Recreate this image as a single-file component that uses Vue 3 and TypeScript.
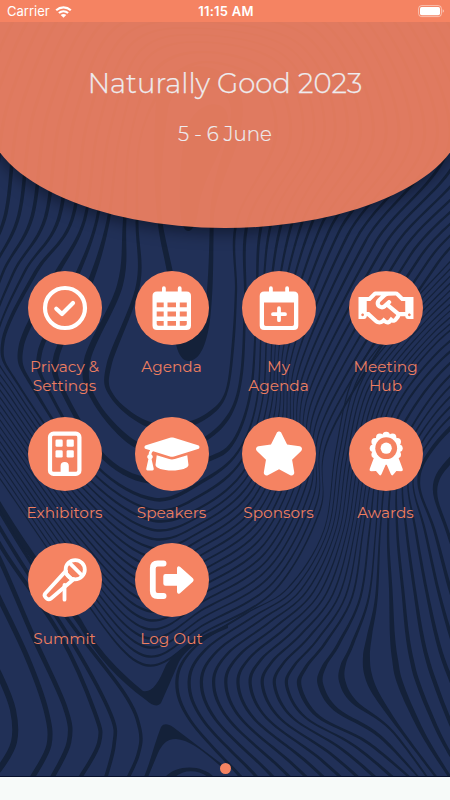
<script setup lang="ts">
type Point = [number, number]
interface Key { at: number; pts: Point[] }
interface Tile { id: string; label: string; icon: string }

const tiles: Tile[] = [
  { id: 'privacy', label: 'Privacy &\nSettings', icon: 'check' },
  { id: 'agenda', label: 'Agenda', icon: 'calendar' },
  { id: 'my-agenda', label: 'My\nAgenda', icon: 'calendar-plus' },
  { id: 'meeting', label: 'Meeting\nHub', icon: 'handshake' },
  { id: 'exhibitors', label: 'Exhibitors', icon: 'building' },
  { id: 'speakers', label: 'Speakers', icon: 'cap' },
  { id: 'sponsors', label: 'Sponsors', icon: 'star' },
  { id: 'awards', label: 'Awards', icon: 'award' },
  { id: 'summit', label: 'Summit', icon: 'mic' },
  { id: 'logout', label: 'Log Out', icon: 'logout' },
]

const scallops: Point[] = Array.from({ length: 12 }, (_, i) => {
  const a = (i * Math.PI) / 6
  return [37.2 + 12.7 * Math.cos(a), 31.2 + 12.7 * Math.sin(a)] as Point
})

// Nested rings that fill the upper two thirds of the backdrop
const rings: Key[] = [
  { at: 0, pts: [[205, 62], [165, 85], [140, 140], [137, 220], [138, 285], [109, 365], [112, 396], [145, 423], [180, 426], [208, 415], [226, 393], [233, 345], [236, 290], [237, 220], [275, 140], [260, 82]] },
  { at: 1, pts: [[205, 52], [155, 70], [130, 140], [125, 220], [121, 285], [88, 360], [96, 402], [134, 443], [172, 450], [207, 438], [232, 410], [242, 370], [245, 300], [248, 220], [290, 140], [270, 73]] },
  { at: 2, pts: [[205, 42], [147, 58], [120, 135], [108, 220], [88, 285], [55, 358], [64, 395], [105, 460], [155, 482], [203, 462], [232, 445], [251, 392], [257, 310], [263, 220], [303, 138], [280, 64]] },
  { at: 3, pts: [[205, 35], [141, 50], [110, 130], [97, 220], [73, 285], [40, 353], [50, 393], [97, 467], [155, 500], [202, 482], [238, 452], [257, 400], [262, 315], [272, 220], [314, 136], [287, 58]] },
  { at: 5, pts: [[205, 22], [125, 35], [88, 120], [72, 220], [35, 272], [2, 342], [18, 385], [85, 475], [150, 520], [202, 507], [246, 468], [268, 400], [274, 320], [293, 220], [335, 130], [300, 45]] },
  { at: 21, pts: [[205, -110], [-10, -100], [-120, 60], [-140, 200], [-140, 285], [-100, 370], [-25, 445], [70, 580], [142, 664], [205, 632], [275, 590], [320, 510], [332, 430], [437, 264], [540, 130], [410, -90]] },
]

// Ridges sweeping from the right edge into the lower right bulge
const ridges: Key[] = [
  { at: 0, pts: [[485, 225], [412, 303], [356, 372], [336, 450], [324, 530], [288, 588], [245, 614], [195, 647], [177, 680], [190, 720], [240, 776], [260, 800]] },
  { at: 10, pts: [[495, 298], [437, 342], [392, 402], [373, 470], [363, 530], [352, 597], [325, 643], [305, 668], [299, 687], [318, 717], [368, 743], [420, 786]] },
  { at: 12, pts: [[500, 316], [443, 358], [400, 413], [381, 470], [376, 530], [369, 597], [352, 645], [343, 665], [342, 682], [354, 702], [392, 730], [436, 790]] },
  { at: 13, pts: [[503, 326], [447, 366], [406, 420], [387, 470], [380, 530], [376, 597], [369, 635], [366, 655], [368, 675], [378, 697], [405, 737], [446, 790]] },
  { at: 14, pts: [[505, 338], [451, 375], [412, 427], [393, 475], [388, 530], [391, 590], [393, 635], [396, 660], [400, 680], [412, 710], [428, 742], [455, 785]] },
  { at: 19, pts: [[505, 405], [465, 415], [430, 450], [418, 483], [434, 530], [450, 590], [465, 635], [475, 660], [485, 680], [495, 710], [505, 742], [520, 785]] },
  { at: 20, pts: [[520, 445], [480, 440], [448, 463], [435, 490], [447, 530], [468, 590], [485, 635], [495, 660], [505, 680], [515, 710], [525, 742], [540, 785]] },
]

const valleys: { w: number; pts: Point[] }[] = [
  { w: 6, pts: [[-20, 640], [0, 676], [13, 710], [14, 742], [0, 768], [-12, 778]] },
  { w: 5, pts: [[-20, 560], [0, 600], [27, 657], [46, 710], [49, 745], [32, 778]] },
  { w: 4.6, pts: [[-20, 525], [0, 560], [33, 636], [65, 707], [69, 742], [52, 778]] },
  { w: 4, pts: [[-20, 508], [5, 553], [60, 635], [95, 713], [99, 743], [80, 778]] },
  { w: 3.6, pts: [[-20, 494], [15, 553], [74, 645], [111, 715], [114, 745], [105, 780]] },
  { w: 3.4, pts: [[-20, 478], [20, 545], [67, 618], [124, 693], [140, 730], [138, 755], [127, 780]] },
]

const R = (n: number): string => n.toFixed(1)

function lerpKeys(keys: Key[], t: number): Point[] {
  let i = 0
  while (i < keys.length - 2 && t > keys[i + 1].at) i++
  const a = keys[i]
  const b = keys[i + 1]
  const f = (t - a.at) / (b.at - a.at)
  return a.pts.map(([x, y], n) => [x + (b.pts[n][0] - x) * f, y + (b.pts[n][1] - y) * f] as Point)
}

function spline(p: Point[], closed = false): string {
  const n = p.length
  const get = (i: number): Point => (closed ? p[(i + n) % n] : p[Math.max(0, Math.min(n - 1, i))])
  let d = ''
  for (let i = 0; i < (closed ? n : n - 1); i++) {
    const [a, b, c, e] = [get(i - 1), get(i), get(i + 1), get(i + 2)]
    d += `C${R(b[0] + (c[0] - a[0]) / 6)} ${R(b[1] + (c[1] - a[1]) / 6)} ${R(c[0] - (e[0] - b[0]) / 6)} ${R(c[1] - (e[1] - b[1]) / 6)} ${R(c[0])} ${R(c[1])}`
  }
  return d
}

const start = (p: Point[]): string => `${R(p[0][0])} ${R(p[0][1])}`

// A ribbon is the area between two neighbouring curves, so it widens where the family spreads
function ribbon(keys: Key[], t: number, half: number, closed: boolean): string {
  const a = lerpKeys(keys, t - half)
  const b = lerpKeys(keys, t + half)
  if (closed) return `M${start(a)}${spline(a, true)}ZM${start(b)}${spline(b, true)}Z`
  b.reverse()
  return `M${start(a)}${spline(a)}L${start(b)}${spline(b)}Z`
}

const ribbons: string[] = []
for (let i = 0; i <= 21; i++) ribbons.push(ribbon(rings, i, i < 3 ? 0.12 : 0.13, true))
for (let i = 0; i <= 20; i++) ribbons.push(ribbon(ridges, i, 0.13, false))
const strokes = valleys.map((v) => ({ w: v.w, d: `M${start(v.pts)}${spline(v.pts)}` }))
</script>

<template>
  <div class="phone">
    <svg class="backdrop" viewBox="0 0 450 777" aria-hidden="true">
      <path v-for="(d, i) in ribbons" :key="'r' + i" :d="d" fill-rule="evenodd" />
      <path v-for="(s, i) in strokes" :key="'s' + i" :d="s.d" class="valley" :stroke-width="s.w" />
      <path d="M156 100C152 160 155 200 158 225C161 250 169 270 172 310C174 347 179 361 189 361C203 360 209 335 211 310C214 280 213 240 214 215C222 170 242 150 243 110C244 55 162 52 156 100ZM168 110C172 76 228 76 231 110C230 145 213 165 210 215C209 260 208 295 204 312C196 334 184 322 178 302C175 275 167 250 162 220C159 185 164 140 168 110Z" fill-rule="evenodd" />
      <path d="M186 130C196 98 228 98 228 118C226 150 206 170 199 205C196 236 184 238 181 218C178 190 181 150 186 130Z" />
      <path d="M-10 484C22 540 55 583 81 619C98 650 118 670 143 691C152 693 158 684 166 665C180 645 200 637 228 624L228 628C200 640 186 648 178 664C172 678 166 692 161 703C158 707 152 706 146 700C118 680 96 655 79 626C52 585 18 548-10 490Z" />
      <path d="M144 777C151 760 155 742 161 727C164 723 168 724 173 727L231 771L228 773C205 752 190 740 176 739C166 739 162 745 158 753L148 777Z" />
      <path d="M165 777C178 764 202 765 214 777L208 777C196 769 184 770 175 777Z" />
    </svg>

    <header class="status">
      <div class="carrier">
        <span>Carrier</span>
        <svg class="wifi" viewBox="0 0 17 12">
          <path d="M1.2 4.2C5.4.4 11.6.4 15.8 4.2M3.9 7C6.6 4.7 10.4 4.7 13.1 7" />
          <path class="solid" d="M5.7 8.9C7.3 7.6 9.7 7.6 11.3 8.9L8.5 11.7Z" />
        </svg>
      </div>
      <time>11:15 AM</time>
      <svg class="battery" viewBox="0 0 27 13">
        <rect x=".6" y=".6" width="22.8" height="11" rx="3" class="shell" />
        <rect x="2" y="2" width="20" height="8.2" rx="1.6" />
        <path d="M24.7 4.2Q26 4.8 26 6T24.7 7.8Z" class="tip" />
      </svg>
    </header>

    <section class="hero">
      <div class="dome"></div>
      <h1>Naturally Good 2023</h1>
      <p>5 - 6 June</p>
    </section>

    <nav class="grid">
      <a v-for="t in tiles" :key="t.id" class="tile">
        <span class="disc">
          <svg viewBox="0 0 74 74">
            <g v-if="t.icon === 'check'" class="line">
              <circle cx="37" cy="37" r="20" />
              <path d="M28.3 37.7L34 43L45 32" />
            </g>
            <path v-else-if="t.icon === 'calendar'" fill-rule="evenodd" d="M27 20.5V17.3Q27 15.3 28.9 15.3T30.8 17.3V20.5H42.8V17.3Q42.8 15.3 44.7 15.3T46.6 17.3V20.5H51.5Q56 20.5 56 25V54.5Q56 59 51.5 59H22Q17.5 59 17.5 54.5V25Q17.5 20.5 22 20.5ZM21.7 31.5V36.3H28.7V31.5ZM32.5 31.5V36.3H41V31.5ZM44.8 31.5V36.3H51.8V31.5ZM21.7 40.5V45.5H28.7V40.5ZM32.5 40.5V45.5H41V40.5ZM44.8 40.5V45.5H51.8V40.5ZM21.7 50V53Q21.7 54.8 23.5 54.8H28.7V50ZM32.5 50V54.8H41V50ZM44.8 50V54.8H50Q51.8 54.8 51.8 53V50Z" />
            <g v-else-if="t.icon === 'calendar-plus'">
              <path fill-rule="evenodd" d="M27 20.5V17.3Q27 15.3 28.9 15.3T30.8 17.3V20.5H43.2V17.3Q43.2 15.3 45.1 15.3T47 17.3V20.5H51.8Q56.3 20.5 56.3 25V54.5Q56.3 59 51.8 59H22.2Q17.7 59 17.7 54.5V25Q17.7 20.5 22.2 20.5ZM22 31.5V53.2Q22 54.9 23.7 54.9H50.3Q52 54.9 52 53.2V31.5Z" />
              <path class="line thin" d="M37 37.2V49.2M31 43.2H43" />
            </g>
            <path v-else-if="t.icon === 'handshake'" transform="translate(9.5 15) scale(.0859)" d="M519.2 127.9l-47.6-47.6A56.252 56.252 0 0 0 432 64H205.2c-14.8 0-29.1 5.9-39.6 16.3L118 127.9H0v255.7h64c17.6 0 31.8-14.2 31.9-31.7h9.1l84.6 76.4c30.9 25.1 73.8 25.7 105.6 3.8 12.5 10.8 26 15.9 41.1 15.9 18.2 0 35.3-7.4 48.8-24 22.1 8.7 48.2 2.6 64-16.8l26.2-32.3c5.6-6.9 9.1-14.8 10.9-23h57.9c.1 17.5 14.4 31.7 31.9 31.7h64V127.9H519.2zM48 351.6c-8.8 0-16-7.2-16-16s7.2-16 16-16 16 7.2 16 16c0 8.9-7.2 16-16 16zm390-6.9l-26.1 32.2c-2.8 3.4-7.8 4-11.3 1.2l-23.9-19.4-30 36.5c-6 7.3-15 4.8-18 2.4l-36.8-31.5-15.6 19.2c-13.9 17.1-39.2 19.7-55.3 6.6l-97.3-88H96V175.8h41.9l61.7-61.6c2-.8 3.7-1.5 5.7-2.3H262l-38.7 35.5c-29.4 26.9-31.1 72.3-4.4 101.3 14.8 16.2 61.2 41.2 101.5 4.4l8.2-7.5 108.2 87.8c3.4 2.8 3.9 7.9 1.2 11.3zm106-40.8h-69.2c-2.3-2.8-4.9-5.4-7.7-7.7l-102.7-83.4 12.5-11.4c6.5-6 7-16.1 1-22.6L367 167.1c-6-6.5-16.1-6.9-22.6-1l-55.2 50.6c-9.5 8.7-25.7 9.4-34.6 0-9.3-9.9-8.5-25.1 1.2-33.9l65.6-60.1c7.4-6.8 17-10.5 27-10.5l83.7-.2c2.1 0 4.1.8 5.5 2.3l61.7 61.6H544v128zm48 47.7c-8.8 0-16-7.2-16-16s7.2-16 16-16 16 7.2 16 16c0 8.9-7.2 16-16 16z" />
            <g v-else-if="t.icon === 'building'">
              <rect x="22" y="16.7" width="29.4" height="40.2" rx="3.5" class="line" />
              <rect x="27.5" y="22.5" width="7.2" height="7.2" rx="1.3" />
              <rect x="38.6" y="22.5" width="7.2" height="7.2" rx="1.3" />
              <rect x="27.5" y="33.3" width="7.2" height="7.2" rx="1.3" />
              <rect x="38.6" y="33.3" width="7.2" height="7.2" rx="1.3" />
              <path d="M32.6 57V49Q32.6 44.9 36.7 44.9T40.8 49V57Z" />
            </g>
            <path v-else-if="t.icon === 'cap'" transform="translate(9.5 15) scale(.0859)" d="M622.34 153.2L343.4 67.5c-15.2-4.67-31.6-4.67-46.79 0L17.66 153.2c-23.54 7.23-23.54 38.36 0 45.59l48.63 14.94c-10.67 13.19-17.23 29.28-17.88 46.9C38.78 266.15 32 276.11 32 288c0 10.78 5.68 19.85 13.86 25.65L20.33 428.53C18.11 438.52 25.71 448 35.94 448h56.11c10.24 0 17.84-9.48 15.62-19.47L82.14 313.65C90.32 307.85 96 298.78 96 288c0-11.57-6.47-21.25-15.66-26.87.76-15.02 8.44-28.3 20.69-36.72L296.6 284.5c9.06 2.78 26.44 6.25 46.79 0l278.95-85.7c23.55-7.24 23.55-38.36 0-45.6zM352.79 315.09c-28.53 8.76-52.84 3.92-65.59 0l-145.02-44.55L128 384c0 35.35 85.96 64 192 64s192-28.65 192-64l-14.18-113.47-145.03 44.56z" />
            <path v-else-if="t.icon === 'star'" transform="translate(12.3 14.6) scale(.0859)" d="M259.3 17.8L194 150.2 47.9 171.5c-26.2 3.8-36.7 36.1-17.7 54.6l105.7 103-25 145.5c-4.5 26.3 23.2 46 46.4 33.7L288 439.6l130.7 68.7c23.2 12.2 50.9-7.4 46.4-33.7l-25-145.5 105.7-103c19-18.5 8.5-50.8-17.7-54.6L382 150.2 316.7 17.8c-11.7-23.6-45.6-23.9-57.4 0z" />
            <g v-else-if="t.icon === 'award'">
              <path d="M24.8 41L20.6 52.3Q20.2 54.3 22.2 54.3L27 54L30.2 57.8Q31.5 59.2 32.5 57.3L37.2 46.5L41.9 57.3Q42.9 59.2 44.2 57.8L47.4 54L52.2 54.3Q54.2 54.3 53.8 52.3L49.6 41Z" />
              <circle v-for="(s, i) in scallops" :key="i" :cx="s[0]" :cy="s[1]" r="3.8" />
              <circle cx="37.2" cy="31.2" r="14" />
              <circle cx="37.2" cy="31.2" r="10.9" class="hole" />
              <circle cx="37.2" cy="31.2" r="5.6" />
            </g>
            <g v-else-if="t.icon === 'mic'" class="line thin">
              <circle cx="47.2" cy="26.7" r="9.6" />
              <path d="M42 20.4L53.6 32" />
              <path d="M37.9 27.9L17.4 50.2Q15.6 52.4 17.6 54.4L18.7 55.5Q20.8 57.3 23 55.5L45.6 36.2" />
              <path d="M38.5 31L42.8 35.4M36.5 42V56.7" />
            </g>
            <g v-else>
              <path class="line thick" d="M28.6 20.5H22.7Q17.8 20.5 17.8 25.5V48Q17.8 53 22.7 53H28.6" />
              <path d="M30.5 31H42V25Q42.5 22.3 45 23.7L57.6 35Q59.6 37 57.6 39L45 50.2Q42.5 51.7 42 49V42.7H30.5Q28.3 42.7 28.3 40.5V33.2Q28.3 31 30.5 31Z" />
            </g>
          </svg>
        </span>
        <span class="label">{{ t.label }}</span>
      </a>
    </nav>

    <div class="pager"><i></i></div>
    <footer></footer>
  </div>
</template>

<style>
body {
  margin: 0;
  overflow: hidden;
}
</style>

<style scoped>
.phone {
  position: relative;
  isolation: isolate;
  display: flex;
  flex-direction: column;
  width: 450px;
  height: 800px;
  overflow: hidden;
  background: #213057;
  font-family: Montserrat, Inter, 'Open Sans', sans-serif;
}
.backdrop {
  position: absolute;
  z-index: -2;
  top: 0;
  left: 0;
  width: 450px;
  height: 777px;
  fill: #142139;
}
.valley {
  fill: none;
  stroke: #142139;
}
.status {
  display: grid;
  grid-template-columns: 1fr auto 1fr;
  align-items: center;
  height: 22px;
  padding: 1px 5px 0 7px;
  box-sizing: border-box;
  background: #f58362;
  color: #fff;
  font: 400 13px/21px Inter, sans-serif;
}
.carrier {
  display: flex;
  align-items: center;
  gap: 5px;
}
.wifi {
  width: 17px;
  height: 12px;
  fill: none;
  stroke: #fff;
  stroke-width: 2.2;
}
.wifi .solid {
  fill: #fff;
  stroke: none;
}
.status time {
  font-weight: 600;
  font-size: 13px;
  letter-spacing: 0.25px;
}
.battery {
  justify-self: end;
  width: 27px;
  height: 13px;
  fill: #fff;
}
.battery .shell {
  fill: none;
  stroke: #fff;
  stroke-opacity: 0.5;
}
.battery .tip {
  fill-opacity: 0.5;
}
.hero {
  position: relative;
  height: 206px;
  box-sizing: border-box;
  padding-top: 42px;
  text-align: center;
  color: #eeecef;
  clip-path: inset(0 0 -40px 0);
}
.dome {
  position: absolute;
  z-index: -1;
  top: -40px;
  left: -14px;
  right: -14px;
  bottom: 0;
  border-radius: 0 0 50% 50% / 0 0 114px 114px;
  background: #f58362;
  opacity: 0.9;
  box-shadow: 0 4px 16px 0 rgba(0, 0, 0, 0.5);
}
.hero h1 {
  margin: 0;
  font-size: 27.5px;
  line-height: 38px;
  font-weight: 300;
  -webkit-text-stroke: 0.25px currentColor;
}
.hero p {
  margin: 18px 0 0;
  font-size: 19.8px;
  line-height: 28px;
  font-weight: 300;
  -webkit-text-stroke: 0.2px currentColor;
}
.grid {
  display: grid;
  grid-template-columns: repeat(4, 107px);
  row-gap: 20.8px;
  padding: 43.2px 11px 0;
}
.tile {
  display: flex;
  flex-direction: column;
  align-items: center;
  gap: 11.8px;
}
.disc {
  display: block;
  width: 74px;
  height: 74px;
  border-radius: 50%;
  background: #f58362;
}
.disc svg {
  display: block;
  width: 74px;
  height: 74px;
  fill: #fff;
}
.disc .line {
  fill: none;
  stroke: #fff;
  stroke-width: 4.2;
  stroke-linecap: round;
  stroke-linejoin: round;
}
.disc .thin {
  stroke-width: 3.8;
}
.disc .thick {
  stroke-width: 5.8;
}
.disc .hole {
  fill: #f58362;
}
.label {
  white-space: pre-line;
  text-align: center;
  color: #ed7e60;
  font-size: 15.3px;
  line-height: 19.5px;
}
.pager {
  flex: 1;
  display: flex;
  align-items: flex-end;
  justify-content: center;
  padding-bottom: 2.5px;
}
.pager i {
  width: 11px;
  height: 11px;
  border-radius: 50%;
  background: #f58362;
}
footer {
  height: 24px;
  box-sizing: border-box;
  border-top: 1px solid #07102c;
  background: #f7faf9;
}
</style>
